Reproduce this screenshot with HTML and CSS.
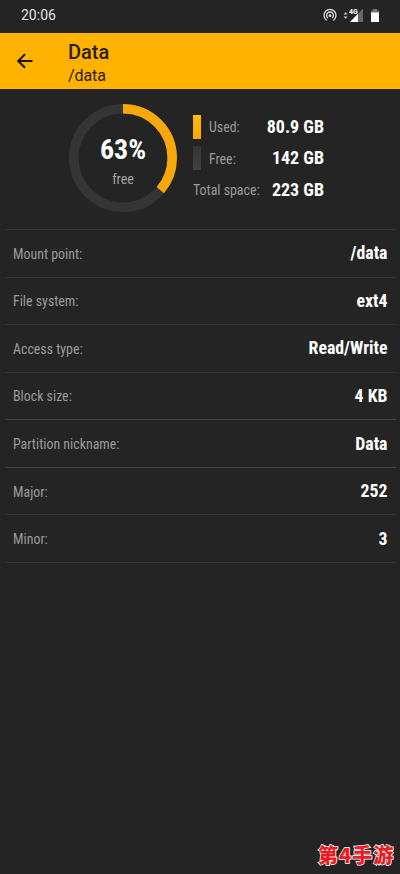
FILE: index.html
```html
<!DOCTYPE html>
<html lang="en">
<head>
<meta charset="utf-8">
<meta name="viewport" content="width=device-width">
<title>Data</title>
<link rel="stylesheet" href="styles.css">
</head>
<body>
<div class="status">
  <span class="clock">20:06</span>
  <svg class="status-icons" width="60" height="18" viewBox="322 6 60 18">
    <g fill="none" stroke="#ddd" stroke-width="1.3" stroke-linecap="round">
      <path d="M326.200 20A6 6 0 1 1 333.800 20"/>
      <path d="M327.600 17.800A3.400 3.400 0 1 1 332.400 17.800"/>
    </g>
    <circle cx="330" cy="15.700" r="1.400" fill="#ddd"/>
    <path d="M343.600 14.600l2-2.300 2 2.300zM343.600 16.400l2 2.300 2-2.300z" fill="#ccc"/>
    <path d="M363 8.500V22H350z" fill="#666"/>
    <path d="M358 13.700V22H350z" fill="#fff"/>
    <text class="network" x="349" y="14">4G</text>
    <path d="M373 9h4v2h-4z" fill="#777"/>
    <path d="M371 10.500h8v3h-8z" fill="#777"/>
    <path d="M371 12.500h8V22h-8z" fill="#fff"/>
  </svg>
</div>
<header class="appbar">
  <svg class="back" width="18" height="18" viewBox="0 0 18 18"><path d="M16.500 9H2.500M9 2.200L2.200 9L9 15.800"/></svg>
  <div class="titles">
    <div class="title">Data</div>
    <div class="subtitle">/data</div>
  </div>
</header>
<section class="summary">
  <div class="donut">
    <svg width="108" height="108" viewBox="0 0 108 108">
      <circle class="track" cx="54" cy="54" r="49.200"/>
      <circle class="used-arc" cx="54" cy="54" r="49.200" pathLength="100" transform="rotate(-90 54 54)"/>
    </svg>
    <div class="donut-text"><div class="percent">63%</div><div class="caption">free</div></div>
  </div>
  <div class="legend">
    <div class="legend-row"><i class="swatch used"></i><span class="label">Used:</span><b class="value">80.9 GB</b></div>
    <div class="legend-row"><i class="swatch free"></i><span class="label">Free:</span><b class="value">142 GB</b></div>
    <div class="legend-row"><span class="label">Total space:</span><b class="value">223 GB</b></div>
  </div>
</section>
<main class="details">
  <div class="row"><span class="label">Mount point:</span><b class="value">/data</b></div>
  <div class="row"><span class="label">File system:</span><b class="value">ext4</b></div>
  <div class="row"><span class="label">Access type:</span><b class="value">Read/Write</b></div>
  <div class="row strong"><span class="label">Block size:</span><b class="value">4 KB</b></div>
  <div class="row strong"><span class="label">Partition nickname:</span><b class="value">Data</b></div>
  <div class="row"><span class="label">Major:</span><b class="value">252</b></div>
  <div class="row"><span class="label">Minor:</span><b class="value">3</b></div>
</main>
<div class="watermark">第4手游</div>
</body>
</html>
```
FILE: styles.css
```css
* { box-sizing: border-box; }
body {
  margin: 0;
  height: 874px;
  overflow: hidden;
  background: #242424;
  color: #fff;
  font-family: "Roboto Condensed", Roboto, sans-serif;
  font-stretch: 75%;
}
.status {
  height: 33px;
  display: flex;
  justify-content: space-between;
  padding: 6px 18px 0 21px;
  font: 14px/19px Roboto, sans-serif;
  color: #e4e4e4;
}
.network { font: bold 7px Roboto, sans-serif; fill: #fff; stroke: #242424; stroke-width: 1px; paint-order: stroke; }
.appbar {
  height: 56px;
  display: flex;
  background: #ffb300;
  color: #2a1c05;
  font-family: Roboto, sans-serif;
  font-stretch: 100%;
}
.back { margin: 19px 0 0 16px; fill: none; stroke: #201504; stroke-width: 2; }
.titles { margin: 7px 0 0 34px; }
.title { font-size: 20px; line-height: 24px; font-weight: 500; }
.subtitle { font-size: 16px; line-height: 24px; letter-spacing: -0.1px; }
.summary { height: 140px; display: flex; padding: 15px 0 0 69px; }
.donut { display: grid; width: 108px; height: 108px; }
.donut > * { grid-area: 1 / 1; }
.donut circle { fill: none; stroke-width: 9.600; }
.donut .track { stroke: #353535; }
.donut .used-arc { stroke: #f9a80a; stroke-dasharray: 36.300 63.700; }
.donut-text { text-align: center; padding-top: 30px; }
.percent { font-size: 28px; line-height: 32px; font-weight: 700; }
.caption { font-size: 14px; line-height: 18px; margin-top: 4px; color: #a5a5a5; }
.legend { width: 131px; margin: 7px 0 0 16px; }
.legend-row { height: 31.500px; display: flex; align-items: center; }
.swatch { width: 8px; height: 24px; margin-right: 8px; }
.swatch.used { background: linear-gradient(#ffbd08, #f5a800); }
.swatch.free { background: linear-gradient(#343434, #414141); }
.label { font-size: 13.900px; line-height: 20px; color: #9b9b9b; white-space: nowrap; padding-top: 1px; }
.value { font-size: 18px; line-height: 22px; margin-left: auto; white-space: nowrap; }
.details { margin: 0 4px 0 5px; border-top: 1px solid #333; }
.details .value { font-size: 17.800px; }
.row {
  height: 47.570px;
  display: flex;
  align-items: center;
  padding: 0 8.500px 0 8px;
  border-bottom: 1px solid #333;
}
.row.strong { border-bottom-color: #444; }
.watermark {
  position: absolute;
  left: 318px;
  top: 842px;
  font: 900 20px/26px "Noto Sans CJK SC", sans-serif;
  letter-spacing: 1px;
  color: #ec1c24;
  -webkit-text-stroke: 1.500px #fff;
  paint-order: stroke fill;
  white-space: nowrap;
}
```
